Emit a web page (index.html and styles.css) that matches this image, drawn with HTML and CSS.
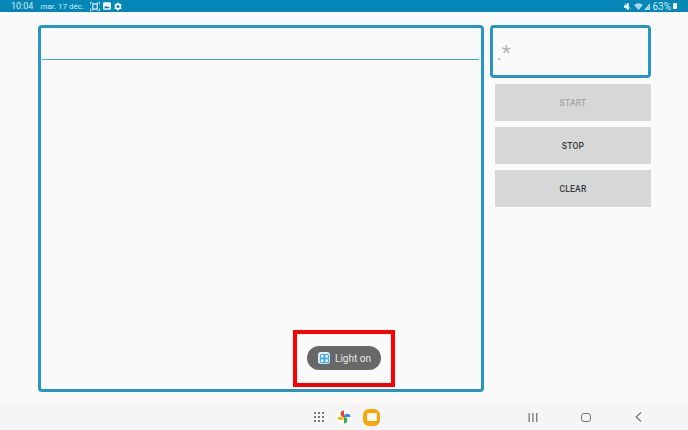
FILE: index.html
```html
<!DOCTYPE html>
<html lang="en">
<head>
    <meta charset="UTF-8">
    <title>Light on</title>
    <link rel="stylesheet" href="styles.css">
</head>
<body>
    <div class="status-bar">
        <span class="clock">10:04</span>
        <span class="date">mar. 17 déc.</span>
        <svg class="status-icon" width="10" height="9" viewBox="0 0 11 10">
            <path d="M0 3V0h3M8 0h3v3M11 7v3H8M3 10H0V7" fill="none" stroke="#e6f4f9" stroke-width="1.3"/>
            <path d="M3 2h5v6H3z" fill="none" stroke="#e6f4f9" stroke-width="1.3"/>
        </svg>
        <svg class="status-icon" width="8" height="8" viewBox="0 0 9 9">
            <rect width="9" height="8.5" y="0.2" rx="1.5" fill="#f2f9fc"/>
            <path d="M1 7l2.4-3 1.6 2 1-1 2 2z" fill="#0487b6"/>
        </svg>
        <svg class="status-icon" width="8" height="9" viewBox="0 0 9 9">
            <circle cx="4.5" cy="4.5" r="2.7" fill="none" stroke="#fff" stroke-width="1.8"/>
            <path d="M4.5 0v2M4.500 7v2M.6 2.200l1.700 1M6.700 5.800l1.700 1M.6 6.800l1.700-1M6.700 3.200l1.700-1" stroke="#fff" stroke-width="1.300"/>
        </svg>
        <div class="status-right">
            <svg width="7" height="7" viewBox="0 0 8 8">
                <path d="M0 3h2l3-3v8L2 5H0zM1 0l7 7" fill="#fff" stroke="#fff" stroke-width="0.7"/>
            </svg>
            <svg class="wifi" width="9" height="7" viewBox="0 0 9 7">
                <path d="M0 2a6.500 6.500 0 0 1 9 0L4.500 7z" fill="#a9d6e6"/>
            </svg>
            <svg class="signal" width="6" height="7" viewBox="0 0 6 7">
                <path d="M0 7L6 0v7z" fill="#a9d6e6"/>
            </svg>
            <span class="battery-text">63%</span>
            <span class="battery"></span>
        </div>
    </div>

    <div class="content">
        <div class="log-panel">
            <div class="log-line"></div>
        </div>
        <div class="side">
            <div class="input-box">
                <span class="dot">.</span><span class="star">*</span>
            </div>
            <button class="btn btn-disabled">START</button>
            <button class="btn">STOP</button>
            <button class="btn">CLEAR</button>
        </div>
    </div>

    <div class="highlight">
        <div class="toast">
            <span class="toast-icon">
                <svg width="11" height="11" viewBox="0 0 11 11">
                    <circle cx="3.600" cy="3.600" r="2.400" fill="none" stroke="#3fa9e0" stroke-width="1.100"/>
                    <circle cx="7.400" cy="3.600" r="2.400" fill="none" stroke="#3fa9e0" stroke-width="1.100"/>
                    <circle cx="3.600" cy="7.400" r="2.400" fill="none" stroke="#3fa9e0" stroke-width="1.100"/>
                    <circle cx="7.400" cy="7.400" r="2.400" fill="none" stroke="#3fa9e0" stroke-width="1.100"/>
                </svg>
            </span>
            <span>Light on</span>
        </div>
    </div>

    <div class="nav-bar">
        <div class="dock">
            <svg class="apps" width="10" height="10" viewBox="0 0 10 10" fill="#777">
                <rect x="0" y="0" width="2" height="2"/><rect x="4" y="0" width="2" height="2"/><rect x="8" y="0" width="2" height="2"/>
                <rect x="0" y="4" width="2" height="2"/><rect x="4" y="4" width="2" height="2"/><rect x="8" y="4" width="2" height="2"/>
                <rect x="0" y="8" width="2" height="2"/><rect x="4" y="8" width="2" height="2"/><rect x="8" y="8" width="2" height="2"/>
            </svg>
            <svg class="photos" width="16" height="16" viewBox="0 0 16 16">
                <circle cx="8" cy="8" r="8" fill="#fff"/>
                <path d="M8 8V1.500A3.300 3.300 0 0 0 4.700 4.800 3.200 3.200 0 0 0 8 8z" fill="#ea4335"/>
                <path d="M8 8h6.500a3.300 3.300 0 0 0-3.300-3.300A3.200 3.200 0 0 0 8 8z" fill="#4285f4"/>
                <path d="M8 8v6.500a3.300 3.300 0 0 0 3.300-3.300A3.200 3.200 0 0 0 8 8z" fill="#34a853"/>
                <path d="M8 8H1.500a3.300 3.300 0 0 0 3.300 3.300A3.200 3.200 0 0 0 8 8z" fill="#fbbc04"/>
            </svg>
            <span class="files"><span class="folder"></span></span>
        </div>
        <div class="nav-keys">
            <svg width="10" height="9" viewBox="0 0 10 9" fill="#777">
                <rect x="0.500" width="1.300" height="9"/><rect x="4.300" width="1.300" height="9"/><rect x="8.100" width="1.300" height="9"/>
            </svg>
            <span class="home-key"></span>
            <svg width="7" height="10" viewBox="0 0 7 10">
                <path d="M6 .5L1.200 5 6 9.500" fill="none" stroke="#777" stroke-width="1.200"/>
            </svg>
        </div>
    </div>
</body>
</html>
```

FILE: styles.css
```css
html, body {
    margin: 0;
    height: 430px;
    overflow: hidden;
}
body {
    position: relative;
    display: flex;
    flex-direction: column;
    font-family: 'Roboto', 'Liberation Sans', sans-serif;
    background: #fafafa;
}
.status-bar {
    display: flex;
    align-items: center;
    height: 12px;
    padding: 0 3px 0 11px;
    background: #0487b6;
    color: #d3ebf4;
    font-size: 9px;
}
.clock {
    margin-right: 7px;
}
.date {
    margin-right: 6px;
    font-size: 8px;
}
.status-icon {
    margin-right: 3px;
}
.status-right {
    display: flex;
    align-items: center;
    gap: 2px;
    margin-left: auto;
    margin-right: 8px;
}
.battery-text {
    font-size: 10px;
}
.battery {
    width: 4px;
    height: 6px;
    background: #fff;
    border-radius: 1px;
}
.wifi {
    margin-left: 1px;
}
.signal {
    margin-left: -1px;
}
.content {
    flex: 1;
    display: flex;
    align-items: flex-start;
    gap: 6px;
    padding: 13px 37px 0 38px;
}
.log-panel {
    box-sizing: border-box;
    width: 446px;
    height: 367px;
    padding: 31px 2px 0 1px;
    border: 3px solid #2796c3;
    border-radius: 4px;
}
.log-line {
    height: 1px;
    background: #45a9cf;
}
.side {
    display: flex;
    flex-direction: column;
    align-items: flex-end;
    width: 161px;
}
.input-box {
    box-sizing: border-box;
    width: 161px;
    height: 53px;
    margin-bottom: 6px;
    padding: 11px 0 0 4px;
    border: 3px solid #2796c3;
    border-radius: 4px;
    color: #b5b5b5;
    font-size: 18px;
    line-height: 28px;
}
.star {
    font-size: 21px;
}
.btn {
    width: 156px;
    height: 37px;
    margin-bottom: 6px;
    padding: 0;
    border: none;
    border-radius: 1px;
    background: #d6d7d7;
    color: #3a3a3a;
    font-family: inherit;
    font-size: 8.5px;
    font-weight: 500;
    letter-spacing: 0.2px;
}
.btn-disabled {
    color: #a4a5a5;
}
.highlight {
    position: absolute;
    left: 293px;
    top: 330px;
    box-sizing: border-box;
    width: 102px;
    height: 57px;
    padding: 12px 10px;
    border: 4px solid #fe0000;
}
.toast {
    display: flex;
    align-items: center;
    gap: 5px;
    width: 74px;
    height: 24px;
    padding-left: 11px;
    box-sizing: border-box;
    border-radius: 12px;
    background: #686868;
    color: #e6e6e6;
    font-size: 10px;
}
.toast-icon {
    display: flex;
    align-items: center;
    justify-content: center;
    width: 12px;
    height: 12px;
    border-radius: 3px;
    background: #e4f2fa;
}
.nav-bar {
    position: relative;
    display: flex;
    align-items: center;
    height: 26px;
    background: #f5f5f7;
}
.dock {
    display: flex;
    align-items: center;
    gap: 11px;
    margin-left: 314px;
}
.photos {
    margin-left: 1px;
}
.files {
    display: flex;
    align-items: center;
    justify-content: center;
    width: 17px;
    height: 17px;
    border-radius: 6px;
    background: #f6a609;
}
.folder {
    width: 10px;
    height: 8px;
    border-radius: 1px;
    background: #fdf8ec;
}
.nav-keys {
    display: flex;
    align-items: center;
    gap: 43px;
    margin-left: auto;
    margin-right: 46px;
}
.home-key {
    box-sizing: border-box;
    width: 10px;
    height: 9px;
    margin-right: 1px;
    border: 1.3px solid #777;
    border-radius: 3px;
}
```
